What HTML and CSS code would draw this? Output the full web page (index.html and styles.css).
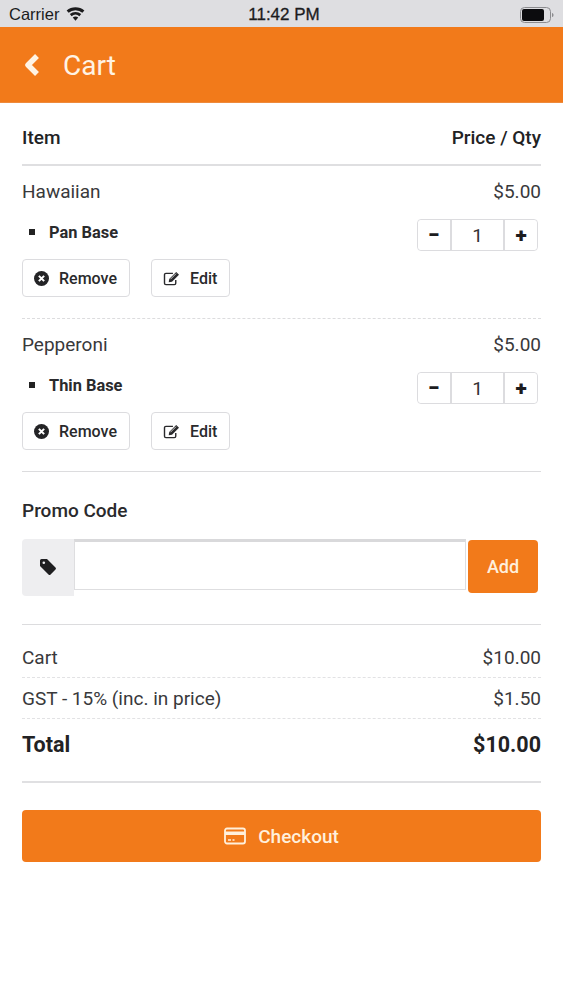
FILE: index.html
```html
<!DOCTYPE html>
<html lang="en">
<head>
<meta charset="utf-8">
<title>Cart</title>
<link rel="stylesheet" href="styles.css">
</head>
<body>
<div class="status">
  <div class="status-left">Carrier
    <svg class="wifi" viewBox="0 0 18 13" width="19" height="14"><path d="M9 13l-2.600-3.100a4 4 0 0 1 5.200 0z M5.300 8.600L3.600 6.600a8.300 8.300 0 0 1 10.800 0l-1.700 2a5.800 5.800 0 0 0-7.400 0z M2.500 5.300L.6 3.200a12.800 12.800 0 0 1 16.800 0l-1.900 2.100a10 10 0 0 0-13 0z" fill="#1b1b1d"/></svg>
  </div>
  <div class="status-time">11:42 PM</div>
  <div class="status-right">
    <svg viewBox="0 0 34 16" width="34" height="16"><rect x=".5" y=".5" width="30" height="15" rx="4" fill="none" stroke="#8b8b8e"/><rect x="2" y="2" width="22" height="12" rx="2" fill="#0c0c0e"/><path d="M32 6v4c1 0 1.500-1 1.500-2s-.5-2-1.500-2z" fill="#8b8b8e"/></svg>
  </div>
</div>
<header class="appbar">
  <svg class="back" viewBox="0 0 18 26" width="18" height="26"><path d="M15 4L6 13l9 9" fill="none" stroke="#fff3e4" stroke-width="5.500" stroke-linejoin="round"/></svg>
  <span class="appbar-title">Cart</span>
</header>
<main class="content">
  <div class="head-row"><span>Item</span><span>Price / Qty</span></div>

  <section class="item item-dashed">
    <div class="item-top"><span>Hawaiian</span><span>$5.00</span></div>
    <div class="item-mid">
      <div class="base"><i class="bullet"></i>Pan Base</div>
      <div class="stepper">
        <button class="step-btn">−</button><div class="step-val">1</div><button class="step-btn">+</button>
      </div>
    </div>
    <div class="actions">
      <button class="btn btn-remove">
        <svg viewBox="0 0 16 16" width="15" height="15"><circle cx="8" cy="8" r="8" fill="#242426"/><path d="M5.200 5.200l5.600 5.600M10.800 5.200l-5.600 5.600" stroke="#fff" stroke-width="2.200"/></svg>Remove</button>
      <button class="btn btn-edit">
        <svg viewBox="0 0 18 16" width="18" height="15"><path d="M13 9.500V13a1.500 1.500 0 0 1-1.500 1.500h-9A1.500 1.500 0 0 1 1 13V4a1.500 1.500 0 0 1 1.500-1.500H10" fill="none" stroke="#2a2a2c" stroke-width="1.500"/><path d="M6 8.500L13.500 1l3 3L9 11.500l-3.500.5z" fill="#2a2a2c"/><path d="M7.300 8.800l6-6" stroke="#fff" stroke-width=".8"/></svg>Edit</button>
    </div>
  </section>

  <section class="item item-solid">
    <div class="item-top"><span>Pepperoni</span><span>$5.00</span></div>
    <div class="item-mid">
      <div class="base"><i class="bullet"></i>Thin Base</div>
      <div class="stepper">
        <button class="step-btn">−</button><div class="step-val">1</div><button class="step-btn">+</button>
      </div>
    </div>
    <div class="actions">
      <button class="btn btn-remove">
        <svg viewBox="0 0 16 16" width="15" height="15"><circle cx="8" cy="8" r="8" fill="#242426"/><path d="M5.200 5.200l5.600 5.600M10.800 5.200l-5.600 5.600" stroke="#fff" stroke-width="2.200"/></svg>Remove</button>
      <button class="btn btn-edit">
        <svg viewBox="0 0 18 16" width="18" height="15"><path d="M13 9.500V13a1.500 1.500 0 0 1-1.500 1.500h-9A1.500 1.500 0 0 1 1 13V4a1.500 1.500 0 0 1 1.500-1.500H10" fill="none" stroke="#2a2a2c" stroke-width="1.500"/><path d="M6 8.500L13.500 1l3 3L9 11.500l-3.500.5z" fill="#2a2a2c"/><path d="M7.300 8.800l6-6" stroke="#fff" stroke-width=".8"/></svg>Edit</button>
    </div>
  </section>

  <section class="promo">
    <div class="promo-title">Promo Code</div>
    <div class="promo-row">
      <div class="promo-tag">
        <svg viewBox="0 0 18 18" width="18" height="18"><path d="M1 2.500A1.500 1.500 0 0 1 2.500 1H8l8.500 8.500a1.500 1.500 0 0 1 0 2.100l-4.900 4.900a1.500 1.500 0 0 1-2.100 0L1 8z" fill="#1f1f21"/><circle cx="4.800" cy="4.800" r="1.300" fill="#eeeef0"/></svg>
      </div>
      <input class="promo-input" type="text" aria-label="Promo code">
      <button class="promo-add">Add</button>
    </div>
  </section>

  <section class="totals">
    <div class="total-row total-dashed"><span>Cart</span><span>$10.00</span></div>
    <div class="total-row total-dashed"><span>GST - 15% (inc. in price)</span><span>$1.50</span></div>
    <div class="total-row total-grand"><span>Total</span><span>$10.00</span></div>
  </section>

  <button class="checkout">
    <svg viewBox="0 0 22 18" width="22" height="18"><rect x="1" y="1.500" width="20" height="15" rx="2" fill="none" stroke="#fff0dc" stroke-width="1.800"/><rect x="1" y="4.500" width="20" height="3.500" fill="#fff0dc"/><path d="M4 13h3M8.500 13h2" stroke="#fff0dc" stroke-width="1.400"/></svg>Checkout</button>
</main>
</body>
</html>
```
FILE: styles.css
```css
* { box-sizing: border-box; }
html, body { margin: 0; padding: 0; background: #fff; }
body { width: 563px; height: 1000px; overflow: hidden; font-family: Roboto, "Liberation Sans", sans-serif; color: #2b2b2d; }
button { font-family: inherit; padding: 0; margin: 0; cursor: pointer; }

.status { height: 27px; background: #dedee1; display: grid; grid-template-columns: 1fr auto 1fr; align-items: center; padding: 2px 9px 0; font-family: "Liberation Sans", sans-serif; font-size: 16.500px; color: #1b1b1d; }
.status-left { display: flex; align-items: center; gap: 7px; }
.wifi { margin-top: -2px; }
.status-time { font-size: 17px; padding-left: 5px; -webkit-text-stroke: .3px #1b1b1d; }
.status-right { display: flex; justify-content: flex-end; }

.appbar { height: 76px; background: #f27a1a; display: flex; align-items: center; padding-left: 22px; border-bottom: 1px solid #ee8a3c; }
.back { margin-right: 23px; }
.appbar-title { font-size: 28px; font-weight: 400; color: #fff3e4; padding-top: 2px; }

.content { padding: 0 22px; }
.head-row { height: 63px; display: flex; justify-content: space-between; align-items: center; padding-top: 8px; border-bottom: 2px solid #dfdfe1; font-size: 19px; font-weight: 500; color: #222224; }

.item { height: 153px; padding-top: 12px; }
.item-dashed { border-bottom: 1px dashed #dcdcde; }
.item-solid { border-bottom: 1px solid #dcdcde; }
.item-top { display: flex; justify-content: space-between; align-items: center; height: 26px; font-size: 19px; color: #39393b; }
.item-mid { display: flex; justify-content: space-between; align-items: center; height: 40px; margin-top: 11px; padding-right: 3px; }
.base { display: flex; align-items: center; font-size: 16.400px; font-weight: 700; color: #2a2a2c; padding-left: 7px; margin-top: -6px; }
.bullet { width: 6px; height: 6px; background: #222; margin-right: 14px; }
.stepper { display: flex; height: 32px; border: 1px solid #dcdcdf; border-radius: 4px; background: #fff; }
.step-btn { width: 32px; border: 0; background: #fff; font-size: 21px; font-weight: 900; color: #1c1c1e; line-height: 1; border-radius: 4px; }
.step-val { width: 55px; border-left: 2px solid #dcdcdf; border-right: 2px solid #dcdcdf; display: flex; align-items: center; justify-content: center; font-size: 19px; color: #333; }
.actions { display: flex; gap: 21px; margin-top: 4px; }
.btn { height: 38px; display: flex; align-items: center; background: #fff; border: 1px solid #dcdcdf; border-radius: 4px; font-size: 16px; font-weight: 500; color: #2a2a2c; }
.btn-remove { width: 108px; padding-left: 11px; gap: 10px; }
.btn-edit { width: 79px; padding-left: 11px; gap: 9px; }

.promo { height: 153px; padding-top: 25px; border-bottom: 1px solid #dcdcde; }
.promo-title { font-size: 19px; font-weight: 500; color: #2a2a2c; line-height: 28px; }
.promo-row { display: flex; align-items: flex-start; margin-top: 14px; }
.promo-tag { width: 52px; height: 57px; background: #eeeef0; border-radius: 4px 0 0 4px; display: flex; align-items: center; justify-content: center; padding-bottom: 2px; }
.promo-input { width: 392px; height: 51px; border: 1px solid #dedee0; border-top: 3px solid #d9d9db; background: #fff; outline: 0; }
.promo-add { width: 70px; height: 53px; margin-left: 2px; margin-top: 1px; background: #f27a1a; border: 0; border-radius: 4px; color: #fff0dc; font-size: 18px; font-weight: 500; }

.totals { padding-top: 12px; height: 158px; border-bottom: 2px solid #e0e0e2; }
.total-row { display: flex; justify-content: space-between; align-items: center; height: 41px; font-size: 19px; color: #39393b; }
.total-dashed { border-bottom: 1px dashed #e2e2e4; }
.total-grand { height: 50px; font-size: 21.500px; font-weight: 700; color: #222224; }

.checkout { width: 519px; height: 52px; margin-top: 27px; background: #f27a1a; border: 0; border-radius: 4px; display: flex; align-items: center; justify-content: center; gap: 12px; color: #fff0dc; font-size: 19px; font-weight: 500; }
```
